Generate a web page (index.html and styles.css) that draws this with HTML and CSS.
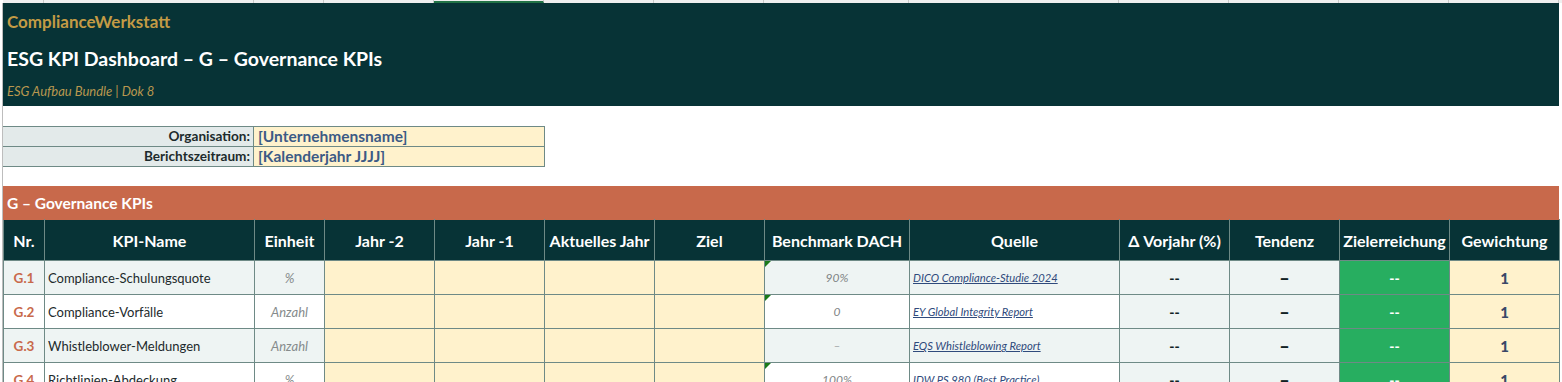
FILE: index.html
```html
<!DOCTYPE html>
<html lang="de">
<head>
<meta charset="utf-8">
<title>ESG KPI Dashboard – G – Governance KPIs</title>
<link rel="stylesheet" href="styles.css">
</head>
<body>
<div class="sheet">
  <div class="colstrip">
    <span class="c c1"></span><span class="c c2"></span><span class="c c3"></span><span class="c c4"></span><span class="c c4 sel"></span><span class="c c4"></span><span class="c c4"></span><span class="c c5"></span><span class="c c2"></span><span class="c c4"></span><span class="c c4"></span><span class="c c4"></span><span class="c c4"></span>
  </div>
  <div class="body">
    <header class="banner">
      <div class="brand">ComplianceWerkstatt</div>
      <div class="title">ESG KPI Dashboard – G – Governance KPIs</div>
      <div class="sub">ESG Aufbau Bundle | Dok 8</div>
    </header>
    <div class="gap1"></div>
    <div class="meta">
      <div class="mrow"><div class="mlabel">Organisation:</div><div class="mval">[Unternehmensname]</div></div>
      <div class="mrow"><div class="mlabel">Berichtszeitraum:</div><div class="mval">[Kalenderjahr JJJJ]</div></div>
    </div>
    <div class="gap2"></div>
    <div class="section">G – Governance KPIs</div>
    <table class="kpi">
      <colgroup>
        <col class="w41"><col class="w210"><col class="w70"><col class="w110"><col class="w110"><col class="w110"><col class="w110"><col class="w145"><col class="w210"><col class="w110"><col class="w110"><col class="w110"><col class="w110">
      </colgroup>
      <thead>
        <tr>
          <th>Nr.</th><th>KPI-Name</th><th>Einheit</th><th>Jahr -2</th><th>Jahr -1</th><th>Aktuelles Jahr</th><th>Ziel</th><th>Benchmark DACH</th><th>Quelle</th><th>Δ Vorjahr (%)</th><th>Tendenz</th><th>Zielerreichung</th><th>Gewichtung</th>
        </tr>
      </thead>
      <tbody>
        <tr class="alt">
          <td class="nr">G.1</td><td class="name">Compliance-Schulungsquote</td><td class="unit">%</td><td class="in"></td><td class="in"></td><td class="in"></td><td class="in"></td><td class="bm flag">90%</td><td class="src"><a>DICO Compliance-Studie 2024</a></td><td class="delta">--</td><td class="trend">–</td><td class="goal">--</td><td class="wt">1</td>
        </tr>
        <tr>
          <td class="nr">G.2</td><td class="name">Compliance-Vorfälle</td><td class="unit">Anzahl</td><td class="in"></td><td class="in"></td><td class="in"></td><td class="in"></td><td class="bm flag">0</td><td class="src"><a>EY Global Integrity Report</a></td><td class="delta">--</td><td class="trend">–</td><td class="goal">--</td><td class="wt">1</td>
        </tr>
        <tr class="alt">
          <td class="nr">G.3</td><td class="name">Whistleblower-Meldungen</td><td class="unit">Anzahl</td><td class="in"></td><td class="in"></td><td class="in"></td><td class="in"></td><td class="bm">–</td><td class="src"><a>EQS Whistleblowing Report</a></td><td class="delta">--</td><td class="trend">–</td><td class="goal">--</td><td class="wt">1</td>
        </tr>
        <tr>
          <td class="nr">G.4</td><td class="name">Richtlinien-Abdeckung</td><td class="unit">%</td><td class="in"></td><td class="in"></td><td class="in"></td><td class="in"></td><td class="bm flag">100%</td><td class="src"><a>IDW PS 980 (Best Practice)</a></td><td class="delta">--</td><td class="trend">–</td><td class="goal">--</td><td class="wt">1</td>
        </tr>
      </tbody>
    </table>
  </div>
</div>
</body>
</html>
```
FILE: styles.css
```css
* { box-sizing: border-box; }
html, body { margin: 0; padding: 0; background: #ffffff; overflow: hidden; }
body { font-family: Lato, "Open Sans", "Noto Sans", sans-serif; color: #1d2a2c; }

.sheet { width: 1562px; height: 382px; overflow: hidden; }

.colstrip { display: flex; height: 3px; margin-left: 3px; background: #efefef; }
.colstrip .c { height: 3px; border-right: 1px solid #c9c9c9; }
.colstrip .c1 { width: 41px; }
.colstrip .c2 { width: 210px; }
.colstrip .c3 { width: 70px; }
.colstrip .c4 { width: 110px; }
.colstrip .c5 { width: 145px; }
.colstrip .sel { border-bottom: 2px solid #217346; }

.body { margin-left: 2px; border-left: 1px solid #bdbdbd; width: 1557px; }

.banner { background: #073336; width: 1556px; height: 103px; display: flex; flex-direction: column; padding-left: 4px; }
.brand { height: 37px; display: flex; align-items: center; color: #c39b45; font-weight: 700; font-size: 17px; }
.title { height: 36px; display: flex; align-items: center; color: #ffffff; font-weight: 700; font-size: 19.5px; }
.sub { height: 30px; display: flex; align-items: center; color: #b8974f; font-style: italic; font-size: 13px; }

.gap1 { height: 20px; }
.gap2 { height: 19px; }

.meta { width: 542px; border-top: 1px solid #6e8a86; }
.mrow { display: flex; height: 20px; border-bottom: 1px solid #6e8a86; }
.mlabel { width: 251px; background: #e3eaea; text-align: right; padding-right: 3px; font-weight: 700; font-size: 13.6px; line-height: 19px; color: #1d2a2c; border-right: 1px solid #6e8a86; }
.mval { width: 291px; background: #fff2cc; padding-left: 4px; font-weight: 700; font-size: 15.5px; line-height: 19px; color: #3c5a85; border-right: 1px solid #6e8a86; }

.section { background: #c8694b; width: 1556px; height: 34px; color: #ffffff; font-weight: 700; font-size: 15.5px; display: flex; align-items: center; padding-left: 4px; }

.kpi { border-collapse: collapse; table-layout: fixed; width: 1557px; margin-top: -1px; }
.w41 { width: 41px; } .w210 { width: 210px; } .w70 { width: 70px; } .w110 { width: 110px; } .w145 { width: 145px; }
.kpi th { background: #073336; color: #ffffff; font-weight: 700; font-size: 16px; height: 41px; border: 1px solid #6e8a86; border-top: 1px solid #c8694b; text-align: center; padding: 0; white-space: nowrap; }
.kpi td { height: 34px; border: 1px solid #6e8a86; padding: 0; font-size: 13px; background: #ffffff; white-space: nowrap; text-align: center; }
.kpi tr.alt td { background: #eef4f3; }
.kpi td.nr { color: #c8694b; font-weight: 700; font-size: 13.5px; }
.kpi td.name { text-align: left; padding-left: 3px; color: #1d2a2c; }
.kpi td.unit { color: #858b8c; font-style: italic; font-size: 13px; }
.kpi td.in, .kpi tr.alt td.in { background: #fff2cc; }
.kpi td.bm { color: #7f8485; font-style: italic; font-size: 12px; position: relative; }
.kpi td.flag::before { content: ""; position: absolute; left: 0; top: 0; border-top: 6px solid #1a7a1a; border-right: 6px solid transparent; }
.kpi td.src { text-align: left; padding-left: 3px; font-size: 11.2px; font-style: italic; }
.kpi td.src a { color: #2f4a7c; text-decoration: underline; }
.kpi td.delta, .kpi tr td.delta { background: #eef4f3; font-weight: 900; font-size: 14px; color: #102224; }
.kpi td.trend, .kpi tr td.trend { background: #eef4f3; font-weight: 900; font-size: 18px; color: #102224; }
.kpi td.goal, .kpi tr.alt td.goal { background: #27ae60; color: #ffffff; font-weight: 900; font-size: 14px; }
.kpi td.wt, .kpi tr.alt td.wt { background: #fff2cc; color: #3a4868; font-weight: 900; font-size: 15px; }
```
